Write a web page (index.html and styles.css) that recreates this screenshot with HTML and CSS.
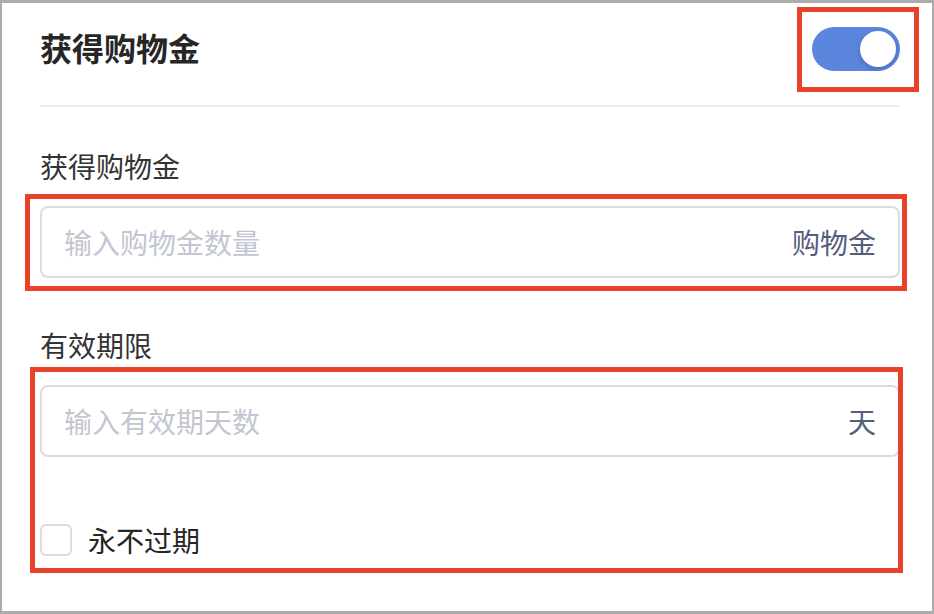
FILE: index.html
```html
<!DOCTYPE html>
<html lang="zh-CN">
<head>
    <meta charset="UTF-8">
    <meta name="viewport" content="width=device-width, initial-scale=1.0">
    <title>获得购物金</title>
    <link rel="stylesheet" href="styles.css">
</head>
<body>
    <div class="panel">
        <!-- Cabecera con interruptor -->
        <div class="panel-header">
            <h1 class="panel-title">获得购物金</h1>
            <div class="mark mark-switch">
                <div class="switch on">
                    <div class="knob"></div>
                </div>
            </div>
        </div>

        <!-- Cantidad -->
        <div class="form-item first">
            <div class="form-label">获得购物金</div>
            <div class="mark mark-amount">
                <div class="field">
                    <input class="field-input" type="text" placeholder="输入购物金数量">
                    <span class="field-suffix">购物金</span>
                </div>
            </div>
        </div>

        <!-- Validez -->
        <div class="form-item">
            <div class="form-label">有效期限</div>
            <div class="mark mark-expire">
                <div class="field">
                    <input class="field-input" type="text" placeholder="输入有效期天数">
                    <span class="field-suffix">天</span>
                </div>
                <label class="check">
                    <span class="check-box"></span>
                    <span class="check-text">永不过期</span>
                </label>
            </div>
        </div>
    </div>
</body>
</html>
```

FILE: styles.css
```css
body {
    margin: 0;
    padding: 0;
    font-family: "Noto Sans CJK SC", "Noto Sans", sans-serif;
    background: #fff;
    color: #333;
}

/* Marco principal */
.panel {
    width: 934px;
    height: 614px;
    box-sizing: border-box;
    border-style: solid;
    border-color: #acacac;
    border-width: 3px 2px 3px 2px;
    background: #fff;
    padding: 0 32px 0 38px;
    overflow: hidden;
}

/* Cabecera */
.panel-header {
    display: flex;
    justify-content: space-between;
    align-items: center;
    padding: 22px 0 32px;
    border-bottom: 2px solid #ededed;
}

.panel-title {
    margin: 0;
    padding-bottom: 4px;
    font-size: 32px;
    line-height: 44px;
    font-weight: 700;
    color: #262626;
}

/* Interruptor */
.switch {
    width: 88px;
    height: 44px;
    box-sizing: border-box;
    padding: 4px;
    border-radius: 22px;
    background: #5b86dd;
    display: flex;
    justify-content: flex-end;
    align-items: center;
}

.knob {
    width: 36px;
    height: 36px;
    border-radius: 50%;
    background: #fff;
    box-shadow: 0 2px 5px rgba(0,0,0,0.2);
}

/* Campos del formulario */
.form-item {
    margin-top: 47px;
}

.form-item.first {
    margin-top: 39px;
}

.form-label {
    font-size: 28px;
    line-height: 40px;
    color: #333;
    margin-bottom: 20px;
}

.field {
    display: flex;
    align-items: center;
    height: 72px;
    box-sizing: border-box;
    border: 2px solid #dcdcdc;
    border-radius: 8px;
    padding: 0 22px;
}

.field-input {
    flex: 1;
    min-width: 0;
    border: none;
    outline: none;
    padding: 0;
    background: transparent;
    font-family: inherit;
    font-size: 28px;
    color: #333;
}

.field-input::placeholder {
    color: #c2c6d0;
}

.field-suffix {
    font-size: 28px;
    color: #545d7a;
}

/* Casilla */
.check {
    display: flex;
    align-items: center;
    gap: 16px;
    margin-top: 67px;
}

.check-box {
    width: 32px;
    height: 32px;
    box-sizing: border-box;
    border: 2px solid #dcdcdc;
    border-radius: 6px;
}

.check-text {
    font-size: 28px;
    line-height: 32px;
    color: #262626;
}

/* Recuadros rojos de anotación */
.mark {
    position: relative;
}

.mark::after {
    content: "";
    position: absolute;
    border: 5px solid #ea4129;
    pointer-events: none;
}

.mark-switch::after {
    top: -20px;
    bottom: -21px;
    left: -15px;
    right: -19px;
}

.mark-amount::after {
    top: -12px;
    bottom: -13px;
    left: -15px;
    right: -7px;
}

.mark-expire::after {
    top: -18px;
    bottom: -17px;
    left: -10px;
    right: -3px;
}
```
